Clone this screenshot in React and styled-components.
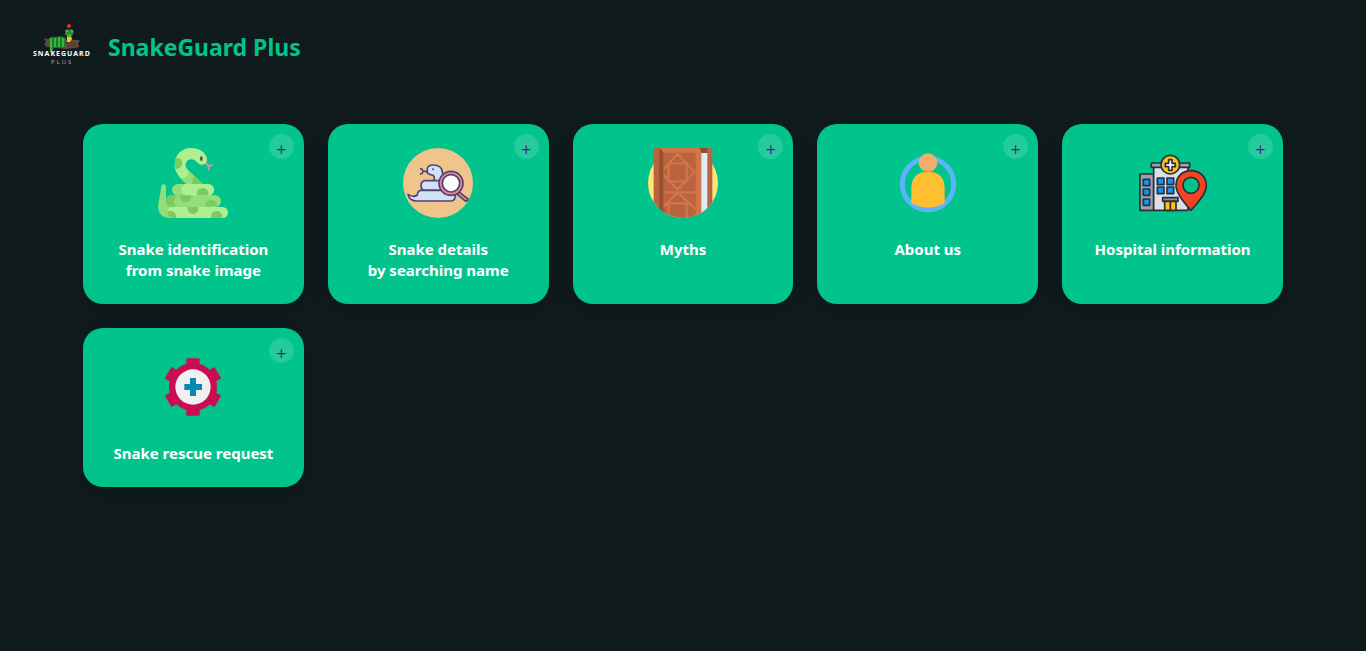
import React from "react";
import styled, { createGlobalStyle } from "styled-components";

const GlobalStyle = createGlobalStyle`
  *, *::before, *::after { box-sizing: border-box; }
  body {
    margin: 0;
    min-height: 100vh;
    background: #101b1d;
    color: #ffffff;
    font-family: "Segoe UI", "Noto Sans", "Open Sans", sans-serif;
  }
`;

const Header = styled.header`
  display: flex;
  align-items: center;
  gap: 16px;
  padding: 16px 32px;
`;

const LogoArt = styled.svg`
  display: block;
  width: 60px;
  height: 64px;
  flex: none;
`;

const BrandName = styled.h1`
  margin: 0;
  padding-bottom: 2px;
  font-size: 23px;
  line-height: 32px;
  font-weight: 700;
  color: #00c48c;
`;

const CardGrid = styled.main`
  display: grid;
  grid-template-columns: repeat(auto-fill, minmax(220px, 1fr));
  gap: 24px;
  max-width: 1200px;
  margin: 28px auto;
`;

const CardLink = styled.a`
  position: relative;
  display: flex;
  flex-direction: column;
  align-items: center;
  gap: 21px;
  padding: 24px 24px 23px;
  border-radius: 20px;
  background: #00c48c;
  box-shadow: 0 8px 20px rgba(0, 0, 0, 0.15);
  color: #551a8b;
  text-align: center;
  text-decoration: none;
`;

const CardArt = styled.svg`
  display: block;
  width: 70px;
  height: 70px;
`;

const CardTitle = styled.span`
  font-size: 15px;
  line-height: 21px;
  font-weight: 700;
  color: #ffffff;
  white-space: pre-line;
`;

const PlusBadge = styled.span`
  position: absolute;
  top: 10px;
  right: 10px;
  width: 25px;
  height: 25px;
  padding-top: 3px;
  border-radius: 50%;
  background: rgba(255, 255, 255, 0.14);
  font-family: "Open Sans", sans-serif;
  font-size: 18px;
  font-weight: 400;
  line-height: 25px;
`;

function Logo() {
  return (
    <LogoArt viewBox="0 0 60 64" role="img" aria-label="SnakeGuard Plus logo">
      <path d="M12 22l3 1 31 1 2 1-2 2 1 4-4 1-9 1-19-2-3-3 2-2z" fill="#64483f" />
      <path d="M34 27h10M35 30h8" stroke="#46312d" strokeWidth="1" />
      <path d="M17 22q4-2 8-1 4-2 9 1v9l-3 1-4-1-3 1-3-1v6l-3-4z" fill="#1d7a2a" />
      <path d="M19 22v14M23 22v9M27 21v10M31 22v9" stroke="#36b83f" strokeWidth="2" />
      <path d="M35 20h4l1 3-2 3h-3z" fill="#e5cf1c" />
      <path d="M33 15l2-2 2 1 3-1 2 3-2 4-3 1-4-2z" fill="#278c37" />
      <path d="M34 15h2m3 0h2m-5 4h3" stroke="#76d455" strokeWidth="1" />
      <path d="M37 8v4m-2-2h4" stroke="#e92929" strokeWidth="2" />
      <text x="1" y="40" fontSize="7" fontWeight="700" letterSpacing="1" fill="#ffffff">SNAKEGUARD</text>
      <text x="19" y="48" fontSize="6" letterSpacing="2" fill="#a3a9aa">PLUS</text>
    </LogoArt>
  );
}

function SnakeIcon() {
  return (
    <CardArt viewBox="24 24 210 210" aria-hidden="true">
      <path d="M165 67l10 10 11-1M175 77l1 11" fill="none" stroke="#ff8b9b" strokeWidth="5" strokeLinecap="round" />
      <path d="M123 24c24 0 42 12 47 29 4 13-5 21-17 21-11 0-14-16-28-16-18 0-24 19-12 31l46 44h-49C88 113 74 95 74 75c0-31 21-51 49-51z" fill="#afef91" />
      <path d="M78 54q19 0 19 16 0 15-19 17-7-16 0-33z" fill="#7bcc5e" />
      <path d="M116 92l43 41h-49L90 113q25 5 26-21z" fill="#92de7a" />
      <path d="M134 109l25 24h-31q-4-16 6-24z" fill="#7bcc5e" />
      <ellipse cx="154" cy="56" rx="4" ry="7" fill="#455554" />
      <path d="M34 141q0-8 7-8t7 8v36q3 20 20 25v32h-8q-36-3-36-37z" fill="#92de7a" />
      <rect x="47" y="166" width="166" height="35" rx="17" fill="#92de7a" />
      <path d="M64 166q9 0 14 4-12 17 0 29l-14 2q-17-3-17-18 0-14 17-17z" fill="#7bcc5e" />
      <rect x="66" y="132" width="126" height="35" rx="17" fill="#92de7a" />
      <rect x="93" y="132" width="99" height="35" rx="17" fill="#afef91" />
      <path d="M140 166q0-22 18-22t18 22z" fill="#7bcc5e" />
      <path d="M90 166q0 20 17 20t17-20zM166 200q2-21 17-21 16 0 18 19z" fill="#7bcc5e" />
      <rect x="51" y="201" width="183" height="33" rx="16" fill="#afef91" />
      <path d="M52 213q24-5 28 21H68q-18-1-16-21zM112 201q1 21 17 21t17-21zM183 234q0-21 17-21t17 21z" fill="#7bcc5e" />
    </CardArt>
  );
}

function SearchSnakeIcon() {
  return (
    <CardArt viewBox="24 24 210 210" aria-hidden="true">
      <circle cx="129" cy="129" r="105" fill="#f0c58b" />
      <g stroke="#504675" strokeWidth="5" strokeLinecap="round" strokeLinejoin="round">
        <path d="M77 86q6 1 7 8-1 6-7 8M84 94h12" fill="none" />
        <path d="M97 99V88q0-13 18-13 25 0 27 21l4 28h-29q3-13-2-18-8 0-18-7z" fill="#d3e1f8" />
        <path d="M90 122h58v29H90q-12-2-12-14 0-13 12-15z" fill="#d3e1f8" />
        <path d="M76 151h90q15 3 15 17 0 13-13 15H67q-24 0-28-20 17 11 28 2 1-12 9-14z" fill="#d3e1f8" />
        <path d="M191 155l28 22q-1 6-7 7l-28-23z" fill="#ee8590" />
        <circle cx="168" cy="130" r="36" fill="#ee8590" />
        <circle cx="168" cy="130" r="26" fill="#ffffff" />
      </g>
      <circle cx="114" cy="88" r="3" fill="#504675" />
    </CardArt>
  );
}

function BookIcon() {
  return (
    <CardArt viewBox="24 24 210 210" aria-hidden="true">
      <clipPath id="book-shape">
        <path d="M24 24h210v105a105 105 0 0 1-210 0z" />
      </clipPath>
      <circle cx="129" cy="129" r="105" fill="#ffe477" />
      <g clipPath="url(#book-shape)">
        <path d="M41 30q0-6 6-6h164q6 0 6 6v204H41z" fill="#b9633f" />
        <path d="M57 24h121q6 2 6 15v195h-17V38H57z" fill="#d37449" />
        <path d="M179 24h23v15h-18q-1-10-5-15z" fill="#8e4930" />
        <path d="M184 39h18v195h-18z" fill="#deedf5" />
        <path d="M184 39h3v195h-3z" fill="#c3d5df" />
        <g fill="none" stroke="#d37449" strokeWidth="7">
          <path d="M113 42L63 97l50 52 50-52zM86 70h54v54H86zM57 157h113M113 157l-48 48M113 157l55 52M86 234v-44h54v44" />
        </g>
        <path d="M101 62l12-13 12 13zM101 131h24l-12 12zM79 83v27L67 97zM147 83l12 14-12 13zM97 183l16-15 16 15zM79 201v22l-13-10zM147 201v22l15-10z" fill="#b9633f" />
        <path d="M57 24q10 4 13 14v196H57z" fill="#98502f" />
      </g>
    </CardArt>
  );
}

function PersonIcon() {
  return (
    <CardArt viewBox="24 24 210 210" aria-hidden="true">
      <circle cx="129" cy="132" r="77" fill="none" stroke="#5eb3fb" strokeWidth="15" />
      <path d="M79 189v-46q2-48 50-48t50 48v46q-50 28-100 0z" fill="#ffbf31" />
      <circle cx="129" cy="68" r="28" fill="#f0b070" />
    </CardArt>
  );
}

function HospitalIcon() {
  return (
    <CardArt viewBox="24 24 210 210" aria-hidden="true">
      <g stroke="#292f38" strokeWidth="5" strokeLinejoin="round">
        <path d="M30 102h41v109H30z" fill="#9ba1b0" />
        <path d="M71 80h103v131H71z" fill="#dcdfe6" />
        <path d="M64 69h115v13H64z" fill="#9ba1b0" />
        <path d="M40 118h19v19H40zM40 147h19v19H40zM40 177h19v19H40zM82 114h20v20H82zM111 114h20v20h-20zM82 141h20v20H82zM111 141h20v20h-20z" fill="#1296f3" />
        <path d="M98 173h46v11H98z" fill="#8b909d" />
        <path d="M104 184h34v27h-34zM121 184v27" fill="#ffbf17" />
        <circle cx="121" cy="74" r="28" fill="#ffc21b" />
        <path d="M116 59h10v11h10v10h-10v11h-10V80h-10V70h10z" fill="#ffffff" />
        <path d="M183 92c27 0 46 19 46 45 0 23-24 50-46 74-22-24-45-51-45-74 0-26 18-45 45-45z" fill="#f04423" />
        <circle cx="183" cy="136" r="24" fill="#00c48c" />
      </g>
    </CardArt>
  );
}

function RescueIcon() {
  return (
    <CardArt viewBox="24 18 210 210" aria-hidden="true">
      <g fill="#ca0d50">
        <circle cx="129" cy="123" r="72" />
        <rect x="109" y="37" width="40" height="172" rx="2" />
        <rect x="109" y="37" width="40" height="172" rx="2" transform="rotate(60 129 123)" />
        <rect x="109" y="37" width="40" height="172" rx="2" transform="rotate(120 129 123)" />
      </g>
      <circle cx="129" cy="123" r="53" fill="#f0f0f1" />
      <path d="M120 96h18v18h18v18h-18v18h-18v-18h-17v-18h17z" fill="#0789b2" />
    </CardArt>
  );
}

const cards = [
  { title: "Snake identification\nfrom snake image", href: "#identify", Icon: SnakeIcon },
  { title: "Snake details\nby searching name", href: "#details", Icon: SearchSnakeIcon },
  { title: "Myths", href: "#myths", Icon: BookIcon },
  { title: "About us", href: "#about", Icon: PersonIcon },
  { title: "Hospital information", href: "#hospitals", Icon: HospitalIcon },
  { title: "Snake rescue request", href: "#rescue", Icon: RescueIcon },
];

export default function App() {
  return (
    <>
      <GlobalStyle />
      <Header>
        <Logo />
        <BrandName>SnakeGuard Plus</BrandName>
      </Header>
      <CardGrid>
        {cards.map(({ title, href, Icon }) => (
          <CardLink key={href} href={href}>
            <Icon />
            <CardTitle>{title}</CardTitle>
            <PlusBadge>+</PlusBadge>
          </CardLink>
        ))}
      </CardGrid>
    </>
  );
}
